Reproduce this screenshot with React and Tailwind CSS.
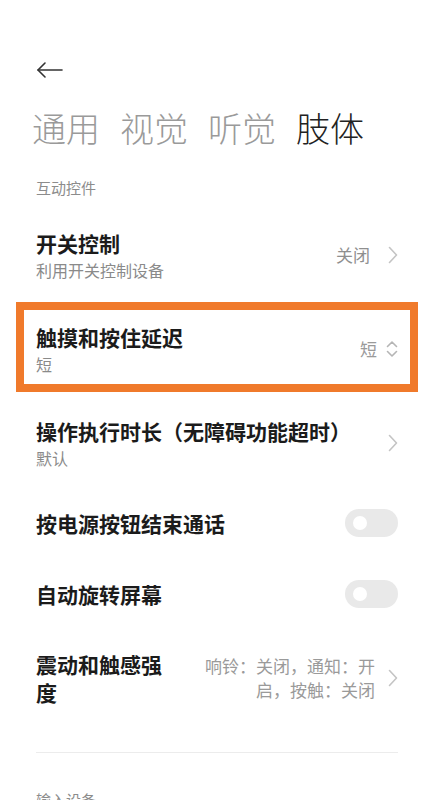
import React from 'react';

const font = { fontFamily: '"Noto Sans CJK SC", "Noto Sans", sans-serif' };

const Chevron = () => (
    <svg width="10" height="18" viewBox="0 0 10 18" fill="none" stroke="#c4c4c4" strokeWidth="1.6" strokeLinecap="round" strokeLinejoin="round">
        <path d="M1.5 1.5L8.5 9L1.5 16.5" />
    </svg>
)

const UpDown = () => (
    <svg width="12" height="20" viewBox="0 0 12 20" fill="none" stroke="#b5b5b5" strokeWidth="1.6" strokeLinecap="round" strokeLinejoin="round">
        <path d="M1.5 7.5L6 3L10.5 7.5" />
        <path d="M1.5 12.5L6 17L10.5 12.5" />
    </svg>
)

const Toggle = () => (
    <div className="w-[53px] h-[28px] rounded-full bg-[#e9e9e9] flex items-center pl-[8px] shrink-0">
        <div className="w-[14px] h-[14px] rounded-full bg-white"></div>
    </div>
)

const App = () => {
    return (
        <div className="w-[434px] h-[800px] overflow-hidden bg-white px-9 pt-[58px]" style={font}>
            {/* back */}
            <svg width="28" height="24" viewBox="0 0 28 24" fill="none" stroke="#333" strokeWidth="1.6" strokeLinecap="round" strokeLinejoin="round">
                <path d="M2 12H26" />
                <path d="M9 5L2 12L9 19" />
            </svg>

            {/* tabs */}
            <div className="mt-[26px] -ml-1 flex gap-5 text-[34px] leading-[40px] font-light">
                <span className="text-[#9a9a9a]">通用</span>
                <span className="text-[#9a9a9a]">视觉</span>
                <span className="text-[#9a9a9a]">听觉</span>
                <span className="text-[#222]">肢体</span>
            </div>

            <div className="mt-[30px] text-[15px] leading-[20px] text-[#8c8c8c]">互动控件</div>

            {/* 开关控制 */}
            <div className="mt-[32px] flex items-center justify-between">
                <div>
                    <div className="text-[21px] leading-[26px] font-semibold text-[#1b1b1b]">开关控制</div>
                    <div className="mt-[4px] text-[16px] leading-[20px] text-[#8a8a8a]">利用开关控制设备</div>
                </div>
                <div className="flex items-center gap-[18px]">
                    <span className="text-[17px] text-[#8f8f8f]">关闭</span>
                    <Chevron />
                </div>
            </div>

            {/* highlighted row */}
            <div className="mt-[22px] -mx-5 border-[8px] border-[#f07a2b] px-3 pt-[14px] pb-[10px] flex items-center justify-between">
                <div>
                    <div className="text-[21px] leading-[26px] font-semibold text-[#1b1b1b]">触摸和按住延迟</div>
                    <div className="mt-[4px] text-[16px] leading-[20px] text-[#8a8a8a]">短</div>
                </div>
                <div className="flex items-center gap-[9px]">
                    <span className="text-[17px] text-[#9a9a9a]">短</span>
                    <UpDown />
                </div>
            </div>

            {/* 操作执行时长 */}
            <div className="mt-[26px] flex items-center justify-between">
                <div>
                    <div className="text-[21px] leading-[26px] font-semibold text-[#1b1b1b] whitespace-nowrap">操作执行时长（无障碍功能超时）</div>
                    <div className="mt-[4px] text-[16px] leading-[20px] text-[#8a8a8a]">默认</div>
                </div>
                <Chevron />
            </div>

            <div className="mt-[41px] flex items-center justify-between h-[28px]">
                <div className="text-[21px] leading-[26px] font-semibold text-[#1b1b1b]">按电源按钮结束通话</div>
                <Toggle />
            </div>

            <div className="mt-[43px] flex items-center justify-between h-[28px]">
                <div className="text-[21px] leading-[26px] font-semibold text-[#1b1b1b]">自动旋转屏幕</div>
                <Toggle />
            </div>

            {/* 震动 */}
            <div className="mt-[42px] flex items-center justify-between">
                <div className="w-[136px] text-[21px] leading-[28px] font-semibold text-[#1b1b1b]">震动和触感强度</div>
                <div className="flex items-center gap-[13px]">
                    <div className="text-right text-[17px] leading-[24px] text-[#9a9a9a]">
                        响铃：关闭，通知：开<br />启，按触：关闭
                    </div>
                    <Chevron />
                </div>
            </div>

            <div className="mt-[46px] h-px bg-[#ececec]"></div>

            <div className="mt-[37px] text-[15px] leading-[20px] text-[#8c8c8c]">输入设备</div>
        </div>
    )
}

export default App
